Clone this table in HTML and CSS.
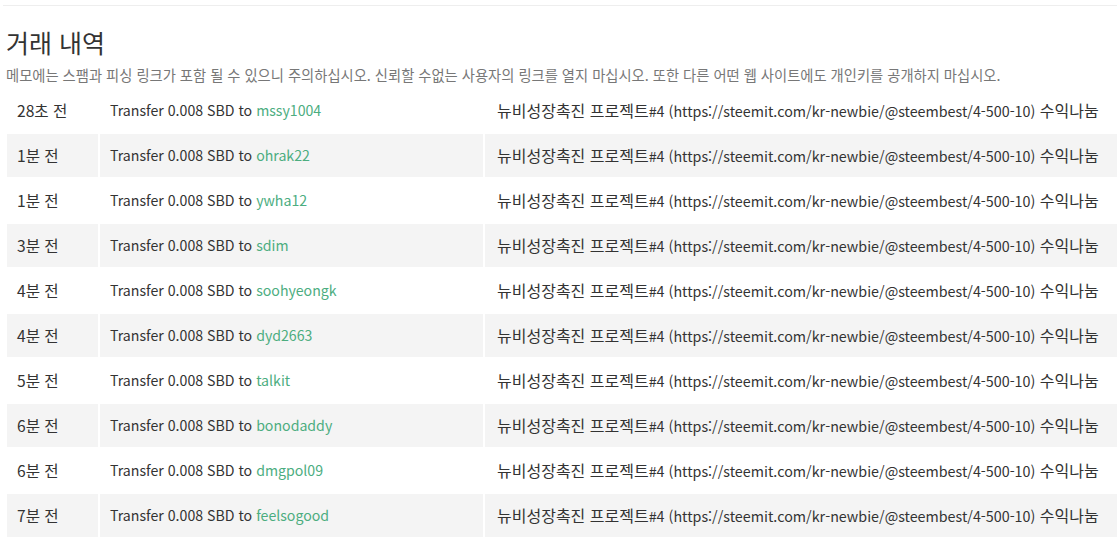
FILE: index.html
```html
<!DOCTYPE html>
<html lang="ko">
<head>
<meta charset="utf-8">
<link rel="stylesheet" href="styles.css">
</head>
<body>
<div class="topline"></div>
<section class="history">
  <h1 class="title">거래 내역</h1>
  <p class="notice">메모에는 스팸과 피싱 링크가 포함 될 수 있으니 주의하십시오. 신뢰할 수없는 사용자의 링크를 열지 마십시오. 또한 다른 어떤 웹 사이트에도 개인키를 공개하지 마십시오.</p>
  <table class="tx">
    <colgroup><col class="c-time"><col class="c-op"><col class="c-memo"></colgroup>
    <tbody>
      <tr><td>28초 전</td><td class="op">Transfer 0.008 SBD to <a class="user">mssy1004</a></td><td>뉴비성장촉진 프로젝트<span class="lat">#4 (https://steemit.com/kr-newbie/@steembest/4-500-10)</span> 수익나눔</td></tr>
      <tr><td>1분 전</td><td class="op">Transfer 0.008 SBD to <a class="user">ohrak22</a></td><td>뉴비성장촉진 프로젝트<span class="lat">#4 (https://steemit.com/kr-newbie/@steembest/4-500-10)</span> 수익나눔</td></tr>
      <tr><td>1분 전</td><td class="op">Transfer 0.008 SBD to <a class="user">ywha12</a></td><td>뉴비성장촉진 프로젝트<span class="lat">#4 (https://steemit.com/kr-newbie/@steembest/4-500-10)</span> 수익나눔</td></tr>
      <tr><td>3분 전</td><td class="op">Transfer 0.008 SBD to <a class="user">sdim</a></td><td>뉴비성장촉진 프로젝트<span class="lat">#4 (https://steemit.com/kr-newbie/@steembest/4-500-10)</span> 수익나눔</td></tr>
      <tr><td>4분 전</td><td class="op">Transfer 0.008 SBD to <a class="user">soohyeongk</a></td><td>뉴비성장촉진 프로젝트<span class="lat">#4 (https://steemit.com/kr-newbie/@steembest/4-500-10)</span> 수익나눔</td></tr>
      <tr><td>4분 전</td><td class="op">Transfer 0.008 SBD to <a class="user">dyd2663</a></td><td>뉴비성장촉진 프로젝트<span class="lat">#4 (https://steemit.com/kr-newbie/@steembest/4-500-10)</span> 수익나눔</td></tr>
      <tr><td>5분 전</td><td class="op">Transfer 0.008 SBD to <a class="user">talkit</a></td><td>뉴비성장촉진 프로젝트<span class="lat">#4 (https://steemit.com/kr-newbie/@steembest/4-500-10)</span> 수익나눔</td></tr>
      <tr><td>6분 전</td><td class="op">Transfer 0.008 SBD to <a class="user">bonodaddy</a></td><td>뉴비성장촉진 프로젝트<span class="lat">#4 (https://steemit.com/kr-newbie/@steembest/4-500-10)</span> 수익나눔</td></tr>
      <tr><td>6분 전</td><td class="op">Transfer 0.008 SBD to <a class="user">dmgpol09</a></td><td>뉴비성장촉진 프로젝트<span class="lat">#4 (https://steemit.com/kr-newbie/@steembest/4-500-10)</span> 수익나눔</td></tr>
      <tr><td>7분 전</td><td class="op">Transfer 0.008 SBD to <a class="user">feelsogood</a></td><td>뉴비성장촉진 프로젝트<span class="lat">#4 (https://steemit.com/kr-newbie/@steembest/4-500-10)</span> 수익나눔</td></tr>
    </tbody>
  </table>
</section>
</body>
</html>
```
FILE: styles.css
```css
html, body {
  margin: 0;
  padding: 0;
  background: #fff;
  overflow: hidden;
}
body {
  font-family: "Noto Sans CJK KR", "Noto Sans", sans-serif;
  color: #333;
}
.topline {
  margin: 5px 0 0 3px;
  height: 1px;
  background: #eeeeee;
}
.history {
  padding: 0 0 0 5px;
}
.title {
  margin: 20px 0 0 1px;
  font-size: 25px;
  line-height: 32px;
  font-weight: 400;
  color: #333;
}
.notice {
  margin: 7px 0 0 1px;
  font-size: 14.3px;
  line-height: 20px;
  color: #777;
  white-space: nowrap;
}
.tx {
  margin-top: 2px;
  border-collapse: separate;
  border-spacing: 2px;
  table-layout: fixed;
  width: 1114px;
  font-size: 15.6px;
}
.c-time { width: 91px; }
.c-op { width: 383px; }
.tx td {
  padding: 10px 10px;
  line-height: 23px;
  height: 23px;
  white-space: nowrap;
  overflow: hidden;
  color: #333;
}
.tx td.op {
  font-size: 14.15px;
}
.tx td:nth-child(3) {
  font-size: 16px;
  padding-left: 12px;
}
.lat {
  font-size: 14.3px;
  line-height: 1;
}
.tx tr:nth-child(even) td {
  background: #f4f4f4;
}
.user {
  color: #4cad7f;
  text-decoration: none;
}
```
